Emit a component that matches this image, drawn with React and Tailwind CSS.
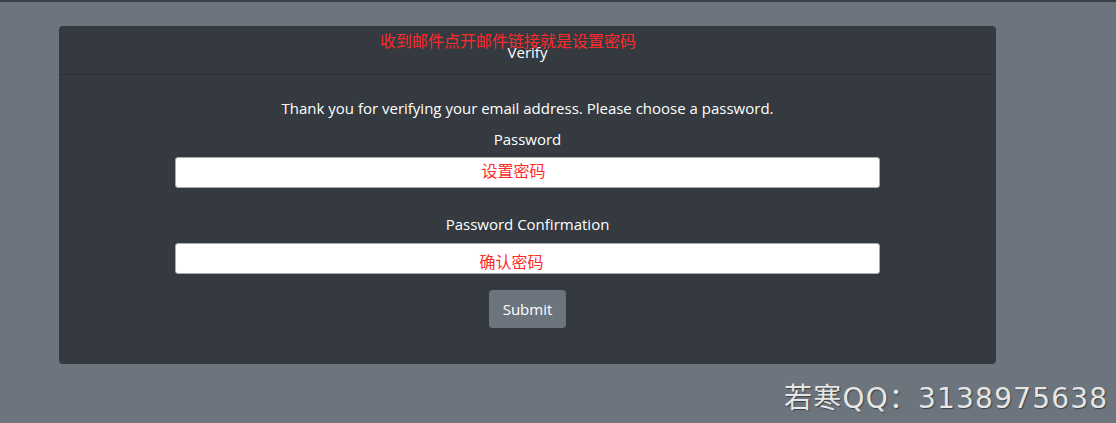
import React from 'react';

const App = () => {
  return (
    <div
      className="relative w-[1116px] h-[423px] overflow-hidden bg-[#6c757d] border-t-2 border-[#3a3f45]"
      style={{ fontFamily: '"Open Sans", "Noto Sans CJK SC", sans-serif' }}
    >
      <div className="ml-[59px] mt-[24px] w-[937px] h-[338px] rounded-[4px] bg-[#343a40] text-white text-[15px] flex flex-col">
        {/* Header */}
        <div className="relative h-[49px] border-b border-[#2c3136] flex items-center justify-center">
          <span className="mt-[5px]">Verify</span>
          <span className="absolute left-[321px] top-[3px] text-[#ff2a2a] text-[16px]">
            收到邮件点开邮件链接就是设置密码
          </span>
        </div>

        {/* Body */}
        <div className="flex flex-col items-center pt-[23px]">
          <p className="leading-[20px]">Thank you for verifying your email address. Please choose a password.</p>
          <label className="mt-[11px] leading-[20px]">Password</label>
          <div className="mt-[8px] w-[705px] h-[31px] bg-white rounded-[3px] border border-[#a7acb1] flex items-center justify-center">
            <span className="text-[#ff2a2a] text-[16px] -mt-[3px] -ml-[28px]">设置密码</span>
          </div>
          <label className="mt-[26px] leading-[20px]">Password Confirmation</label>
          <div className="mt-[9px] w-[705px] h-[31px] bg-white rounded-[3px] border border-[#a7acb1] flex items-center justify-center">
            <span className="text-[#ff2a2a] text-[16px] mt-[6px] -ml-[32px]">确认密码</span>
          </div>
          <button className="mt-[16px] w-[77px] h-[38px] rounded-[4px] bg-[#6c757d] text-white text-[15px]">
            Submit
          </button>
        </div>
      </div>

      {/* Watermark */}
      <div
        className="absolute left-[784px] top-[376px] text-[28px] tracking-[1.2px] text-[#e6e6e6]"
        style={{ fontFamily: '"DejaVu Sans", "Noto Sans CJK SC", sans-serif', textShadow: '1px 1px 1px rgba(0,0,0,0.45)' }}
      >
        若寒QQ：3138975638
      </div>
    </div>
  );
};

export default App;
